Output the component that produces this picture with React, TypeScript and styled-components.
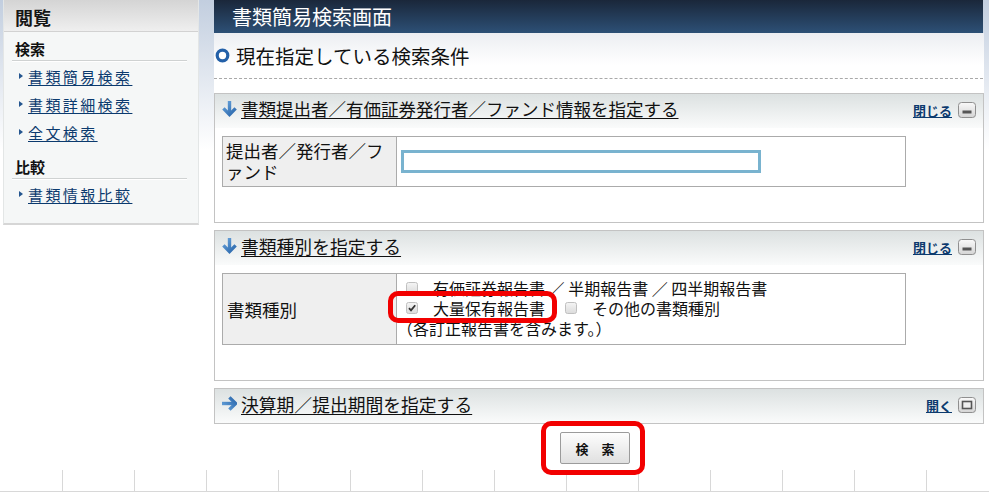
import React from "react";
import styled, { createGlobalStyle } from "styled-components";

const FONT = `"Noto Sans CJK JP", "Noto Sans", "DejaVu Sans", sans-serif`;

const Global = createGlobalStyle`
  html, body { margin: 0; padding: 0; }
  body {
    width: 989px;
    height: 494px;
    overflow: hidden;
    font-family: ${FONT};
    color: #111;
    background: #fff linear-gradient(to bottom, #c2cedf 0px, #dbe2ec 60px, #ffffff 150px) no-repeat;
  }
`;

const Page = styled.div`
  display: flex;
  flex-direction: column;
  width: 989px;
`;

const TopRow = styled.div`
  display: flex;
  align-items: flex-start;
  padding-left: 3px;
`;

/* ---------- Sidebar ---------- */
const Sidebar = styled.nav`
  width: 196px;
  box-sizing: border-box;
  background: #f5f7f7;
  border-left: 1px solid #e3e6e6;
  border-right: 1px solid #e3e6e6;
  border-bottom: 2px solid #d6d6d6;
  padding-bottom: 15px;
`;

const SideHead = styled.div`
  height: 31px;
  line-height: 34px;
  padding-left: 11px;
  border-bottom: 1px solid #d2d2d2;
  background: linear-gradient(to bottom, #d4d4d4, #efefef);
  font-size: 18px;
  font-weight: 700;
  color: #161616;
`;

const Section = styled.div`
  margin: 0 11px 0 8px;
  & + & {
    margin-top: 4px;
  }
`;

const SectionTitle = styled.div`
  font-size: 15px;
  font-weight: 700;
  line-height: 18px;
  padding: 8px 0 2px 3px;
  border-bottom: 1px solid #cfd2d2;
  box-shadow: 0 1px 0 #ffffff;
`;

const LinkList = styled.ul`
  list-style: none;
  margin: 0;
  padding: 1px 0 0 0;
`;

const LinkItem = styled.li`
  display: flex;
  align-items: center;
  height: 28px;
  padding-left: 7px;
  gap: 5px;
`;

const Bullet = styled.span`
  width: 0;
  height: 0;
  border-top: 3.5px solid transparent;
  border-bottom: 3.5px solid transparent;
  border-left: 4px solid #24558f;
`;

const SideLink = styled.a`
  font-size: 15px;
  letter-spacing: 2.4px;
  color: #0b3a6e;
  text-decoration: underline;
  text-underline-offset: 2px;
  cursor: pointer;
`;

/* ---------- Main ---------- */
const Main = styled.main`
  width: 770px;
  margin-left: 15px;
`;

const HeaderBar = styled.h1`
  margin: 0;
  width: 769px;
  height: 33px;
  box-sizing: border-box;
  padding-left: 18px;
  line-height: 33px;
  font-size: 20px;
  font-weight: 400;
  color: #ffffff;
  background: linear-gradient(to bottom, #1a273a, #2d5076);
`;

const MainBody = styled.div`
  background: linear-gradient(to bottom, #eceef2 0px, #ffffff 32px);
`;

const CondHeading = styled.h2`
  margin: 0 1px 0 0;
  height: 45px;
  display: flex;
  align-items: center;
  gap: 6px;
  padding-left: 1px;
  font-size: 19.5px;
  font-weight: 400;
  border-bottom: 1px dashed #a9a9a9;
`;

const Panels = styled.div`
  display: flex;
  flex-direction: column;
  gap: 7px;
  padding-top: 14px;
`;

const Panel = styled.section`
  border: 1px solid #c3c3c3;
  background: #ffffff;
`;

const PanelHeader = styled.div`
  height: 34px;
  box-sizing: border-box;
  display: flex;
  align-items: center;
  padding: 0 7px 5px 7px;
  background: linear-gradient(to bottom, #dce1e1, #fafbfb);
`;

const PanelTitle = styled.a<{ $size?: number }>`
  display: flex;
  align-items: center;
  gap: 4px;
  font-size: ${(p) => p.$size ?? 17.8}px;
  color: #111;
  cursor: pointer;
  span {
    text-decoration: underline;
    text-underline-offset: 2px;
  }
`;

const Toggle = styled.div`
  margin-left: auto;
  margin-top: 3px;
  display: flex;
  align-items: center;
  gap: 6px;
`;

const ToggleLink = styled.a`
  font-size: 13px;
  font-weight: 700;
  color: #0c3a6e;
  text-decoration: underline;
  cursor: pointer;
`;

const PanelBody = styled.div`
  padding: 8px 7px 35px 7px;
`;

const FormGrid = styled.div`
  width: 684px;
  box-sizing: border-box;
  display: grid;
  grid-template-columns: 174px 1fr;
  border: 1px solid #ababab;
`;

const LabelCell = styled.div<{ $center?: boolean }>`
  box-sizing: border-box;
  border-right: 1px solid #ababab;
  background: #efefef;
  padding: ${(p) => (p.$center ? "0 4px 0 4px" : "3px 4px 4px 3px")};
  font-size: 17.5px;
  line-height: 21px;
  line-break: loose;
  display: flex;
  align-items: ${(p) => (p.$center ? "center" : "flex-start")};
`;

const ValueCell = styled.div<{ $pad?: string }>`
  display: flex;
  flex-direction: column;
  justify-content: center;
  padding: ${(p) => p.$pad ?? "0 0 0 4px"};
`;

const TextInput = styled.input`
  width: 360px;
  height: 23px;
  box-sizing: border-box;
  border: 3px solid #79b3cf;
  outline: none;
  font-family: ${FONT};
`;

const CheckLine = styled.div`
  height: 20px;
  line-height: 20px;
  display: flex;
  align-items: center;
  font-size: 16px;
  white-space: pre;
`;

const CheckItem = styled.span`
  position: relative;
  display: inline-flex;
  align-items: center;
  gap: 15px;
  line-height: 20px;
  & + & {
    margin-left: 20px;
  }
`;

const NoteLine = styled(CheckLine)`
  margin-left: -9px;
`;

const Highlight = styled.span<{ $t: number; $r: number; $b: number; $l: number }>`
  position: absolute;
  top: ${(p) => p.$t}px;
  right: ${(p) => p.$r}px;
  bottom: ${(p) => p.$b}px;
  left: ${(p) => p.$l}px;
  border: 5px solid #f20000;
  border-radius: 10px;
  pointer-events: none;
  z-index: 2;
`;

const ButtonRow = styled.div`
  display: flex;
  justify-content: center;
  padding: 8px 8px 0 0;
`;

const ButtonWrap = styled.span`
  position: relative;
  display: inline-flex;
`;

const SearchButton = styled.button`
  width: 70px;
  height: 32px;
  border: 1px solid #9b9b9b;
  border-radius: 2px;
  background: linear-gradient(to bottom, #fdfdfd, #e0e0e0);
  font-family: ${FONT};
  font-size: 13px;
  font-weight: 700;
  color: #111;
  padding: 0;
`;

/* ---------- Footer ---------- */
const Footer = styled.div`
  margin-top: 6px;
  width: 989px;
  overflow: hidden;
  display: grid;
  grid-template-columns: 63px repeat(13, 72px);
  height: 22px;
  box-sizing: border-box;
  border-bottom: 1px solid #d8d8d8;
`;

const FooterCell = styled.div`
  box-sizing: border-box;
  border-right: 1px solid #d8d8d8;
`;

/* ---------- Icons ---------- */
const Ring = () => (
  <svg width="15" height="15" viewBox="0 0 15 15">
    <circle cx="7.5" cy="7.5" r="5.3" fill="#fff" stroke="#2360a8" strokeWidth="3.2" />
  </svg>
);

const Arrow = ({ dir }: { dir: "down" | "right" }) => (
  <svg width="15" height="17" viewBox="0 0 15 17">
    <defs>
      <linearGradient id={`ag-${dir}`} gradientUnits="userSpaceOnUse" x1="0" y1="0" x2="15" y2="17">
        <stop offset="0" stopColor="#72ade3" />
        <stop offset="1" stopColor="#1f5ca3" />
      </linearGradient>
    </defs>
    <g
      transform={dir === "right" ? "rotate(-90 7.5 8.5)" : undefined}
      stroke={`url(#ag-${dir})`}
      strokeWidth="3.4"
      fill="none"
      strokeLinejoin="miter"
    >
      <path d="M7.5 1 V14.5" />
      <path d="M1.4 8.4 L7.5 14.5 L13.6 8.4" />
    </g>
  </svg>
);

const WinButton = ({ kind }: { kind: "min" | "restore" }) => (
  <svg width="18" height="16" viewBox="0 0 18 16">
    <defs>
      <linearGradient id={`wb-${kind}`} gradientUnits="userSpaceOnUse" x1="0" y1="0" x2="0" y2="16">
        <stop offset="0" stopColor="#fbfbfb" />
        <stop offset="1" stopColor="#d3d3d3" />
      </linearGradient>
    </defs>
    <rect x="0.5" y="0.5" width="17" height="15" rx="3" fill={`url(#wb-${kind})`} stroke="#8f8f8f" />
    {kind === "min" ? (
      <rect x="4.5" y="8.5" width="9" height="3" fill="#555" />
    ) : (
      <rect x="4.5" y="4.5" width="9" height="7" fill="#eee" stroke="#555" strokeWidth="1.6" />
    )}
  </svg>
);

const Checkbox = ({ checked }: { checked?: boolean }) => (
  <svg width="12" height="12" viewBox="0 0 12 12">
    <defs>
      <linearGradient id="cbg" gradientUnits="userSpaceOnUse" x1="0" y1="0" x2="0" y2="12">
        <stop offset="0" stopColor="#f6f6f6" />
        <stop offset="1" stopColor="#dadada" />
      </linearGradient>
    </defs>
    <rect x="0.5" y="0.5" width="11" height="11" rx="2" fill="url(#cbg)" stroke="#c0c0c0" />
    {checked && <path d="M3 6.2 L5 8.4 L9.2 3.2" stroke="#333" strokeWidth="1.8" fill="none" />}
  </svg>
);

const footerCells = Array.from({ length: 14 });

export default function App() {
  return (
    <>
      <Global />
      <Page>
        <TopRow>
          <Sidebar>
            <SideHead>閲覧</SideHead>
            <Section>
              <SectionTitle>検索</SectionTitle>
              <LinkList>
                <LinkItem>
                  <Bullet />
                  <SideLink>書類簡易検索</SideLink>
                </LinkItem>
                <LinkItem>
                  <Bullet />
                  <SideLink>書類詳細検索</SideLink>
                </LinkItem>
                <LinkItem>
                  <Bullet />
                  <SideLink>全文検索</SideLink>
                </LinkItem>
              </LinkList>
            </Section>
            <Section>
              <SectionTitle>比較</SectionTitle>
              <LinkList>
                <LinkItem>
                  <Bullet />
                  <SideLink>書類情報比較</SideLink>
                </LinkItem>
              </LinkList>
            </Section>
          </Sidebar>

          <Main>
            <HeaderBar>書類簡易検索画面</HeaderBar>
            <MainBody>
              <CondHeading>
                <Ring />
                現在指定している検索条件
              </CondHeading>
              <Panels>
                <Panel>
                  <PanelHeader>
                    <PanelTitle $size={17.5}>
                      <Arrow dir="down" />
                      <span>書類提出者／有価証券発行者／ファンド情報を指定する</span>
                    </PanelTitle>
                    <Toggle>
                      <ToggleLink>閉じる</ToggleLink>
                      <WinButton kind="min" />
                    </Toggle>
                  </PanelHeader>
                  <PanelBody>
                    <FormGrid>
                      <LabelCell>提出者／発行者／ファンド</LabelCell>
                      <ValueCell>
                        <TextInput type="text" />
                      </ValueCell>
                    </FormGrid>
                  </PanelBody>
                </Panel>

                <Panel>
                  <PanelHeader>
                    <PanelTitle>
                      <Arrow dir="down" />
                      <span>書類種別を指定する</span>
                    </PanelTitle>
                    <Toggle>
                      <ToggleLink>閉じる</ToggleLink>
                      <WinButton kind="min" />
                    </Toggle>
                  </PanelHeader>
                  <PanelBody>
                    <FormGrid>
                      <LabelCell $center>書類種別</LabelCell>
                      <ValueCell $pad="4px 0 6px 9px">
                        <CheckLine>
                          <CheckItem>
                            <Checkbox />
                            {"有価証券報告書 ／ 半期報告書 ／ 四半期報告書"}
                          </CheckItem>
                        </CheckLine>
                        <CheckLine>
                          <CheckItem>
                            <Checkbox checked />
                            大量保有報告書
                            <Highlight $t={-7} $r={-12} $b={-5} $l={-18} />
                          </CheckItem>
                          <CheckItem>
                            <Checkbox />
                            その他の書類種別
                          </CheckItem>
                        </CheckLine>
                        <NoteLine>（各訂正報告書を含みます。）</NoteLine>
                      </ValueCell>
                    </FormGrid>
                  </PanelBody>
                </Panel>

                <Panel>
                  <PanelHeader>
                    <PanelTitle>
                      <Arrow dir="right" />
                      <span>決算期／提出期間を指定する</span>
                    </PanelTitle>
                    <Toggle>
                      <ToggleLink>開く</ToggleLink>
                      <WinButton kind="restore" />
                    </Toggle>
                  </PanelHeader>
                </Panel>
              </Panels>
              <ButtonRow>
                <ButtonWrap>
                  <SearchButton type="button">検　索</SearchButton>
                  <Highlight $t={-11} $r={-15} $b={-11} $l={-19} />
                </ButtonWrap>
              </ButtonRow>
            </MainBody>
          </Main>
        </TopRow>
        <Footer>
          {footerCells.map((_, i) => (
            <FooterCell key={i} />
          ))}
        </Footer>
      </Page>
    </>
  );
}
